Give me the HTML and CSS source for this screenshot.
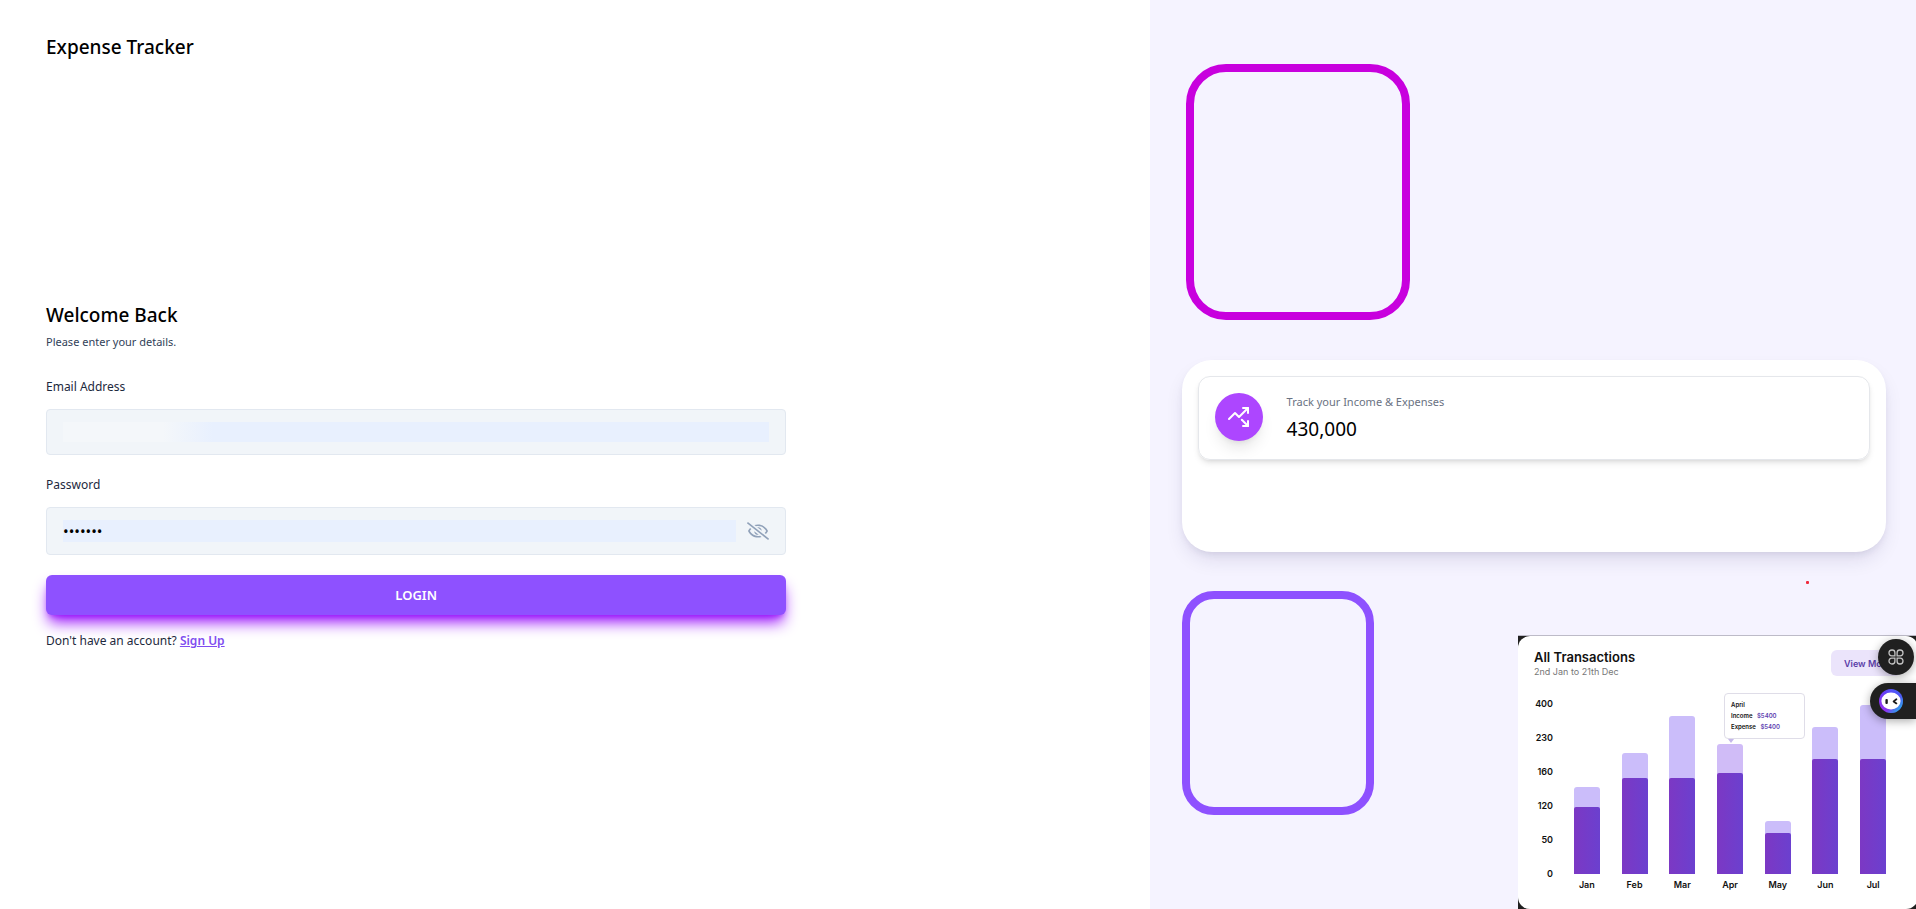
FILE: index.html
```
<!DOCTYPE html>
<html lang="en">
<head>
<meta charset="utf-8">
<meta name="viewport" content="width=device-width, initial-scale=1">
<title>Expense Tracker</title>
<link rel="stylesheet" href="styles.css">
</head>
<body>
<div class="page">
  <main class="auth">
    <h2 class="brand">Expense Tracker</h2>
    <div class="auth-body">
      <h3 class="title">Welcome Back</h3>
      <p class="subtitle">Please enter your details.</p>
      <form class="form">
        <label class="label" for="email">Email Address</label>
        <div class="field"><input class="input input-email" id="email" type="email"></div>
        <label class="label" for="password">Password</label>
        <div class="field">
          <input class="input input-password" id="password" type="password" value="1234567">
          <button class="toggle" type="button" aria-label="Show password">
            <svg width="22" height="18" viewBox="0 0 640 512" fill="currentColor"><path d="M634 471L36 3.51A16 16 0 0 0 13.51 6l-10 12.49A16 16 0 0 0 6 41l598 467.49a16 16 0 0 0 22.49-2.49l10-12.49A16 16 0 0 0 634 471zM296.79 146.47l134.79 105.38C429.36 191.91 380.48 144 320 144a112.26 112.26 0 0 0-23.21 2.47zm46.42 219.07L208.42 260.16C210.65 320.09 259.53 368 320 368a113 113 0 0 0 23.21-2.46zM320 112c98.65 0 189.09 55 237.93 144a285.53 285.53 0 0 1-44 60.2l37.74 29.5a333.7 333.7 0 0 0 52.9-75.11 32.35 32.35 0 0 0 0-29.19C550.29 135.59 442.93 64 320 64c-36.7 0-71.71 7-104.63 18.81l46.41 36.29c18.94-4.3 38.34-7.1 58.22-7.1zm0 288c-98.65 0-189.08-55-237.93-144a285.47 285.47 0 0 1 44.05-60.19l-37.74-29.5a333.6 333.6 0 0 0-52.89 75.1 32.35 32.35 0 0 0 0 29.19C89.72 376.41 197.08 448 320 448c36.7 0 71.71-7.05 104.63-18.81l-46.41-36.28C359.28 397.2 339.89 400 320 400z"/></svg>
          </button>
        </div>
        <button class="login" type="submit">LOGIN</button>
        <p class="signup">Don't have an account? <a class="signup-link" href="#">Sign Up</a></p>
      </form>
    </div>
  </main>

  <aside class="showcase">
    <div class="frame frame-top"></div>
    <div class="card">
      <div class="stat">
        <div class="stat-icon">
          <svg width="24" height="24" viewBox="0 0 24 24" fill="none" stroke="currentColor" stroke-width="2" stroke-linecap="round" stroke-linejoin="round"><path d="M14.828 14.828 21 21"/><path d="M21 16v5h-5"/><path d="m21 3-9 9-4-4-6 6"/><path d="M21 8V3h-5"/></svg>
        </div>
        <div>
          <h6 class="stat-label">Track your Income &amp; Expenses</h6>
          <p class="stat-value">430,000</p>
        </div>
      </div>
    </div>
    <span class="speck"></span>
    <div class="bottom">
      <div class="frame frame-bottom"></div>
      <div class="chart-back">
        <section class="chart">
          <header class="chart-head">
            <div>
              <h4 class="chart-title">All Transactions</h4>
              <p class="chart-range">2nd Jan to 21th Dec</p>
            </div>
            <button class="more" type="button">View More</button>
          </header>
          <div class="plot">
            <div class="axis"><span>400</span><span>230</span><span>160</span><span>120</span><span>50</span><span>0</span></div>
            <div class="bars">
              <div class="col"><div class="bar" style="height:87px"><div class="fill" style="height:67px"></div></div><span class="month">Jan</span></div>
              <div class="col"><div class="bar" style="height:121px"><div class="fill" style="height:96px"></div></div><span class="month">Feb</span></div>
              <div class="col"><div class="bar" style="height:158px"><div class="fill" style="height:96px"></div></div><span class="month">Mar</span></div>
              <div class="col"><div class="bar bar-active" style="height:130px"><div class="fill" style="height:101px"></div>
                <div class="tip"><p>April</p><p>Income <b>$5400</b></p><p>Expense <b>$5400</b></p></div></div><span class="month">Apr</span></div>
              <div class="col"><div class="bar" style="height:53px"><div class="fill" style="height:41px"></div></div><span class="month">May</span></div>
              <div class="col"><div class="bar" style="height:147px"><div class="fill" style="height:115px"></div></div><span class="month">Jun</span></div>
              <div class="col"><div class="bar" style="height:169px"><div class="fill" style="height:115px"></div></div><span class="month">Jul</span></div>
            </div>
          </div>
        </section>
      </div>
    </div>
  </aside>
</div>

<div class="widgets">
  <button class="widget-grid" type="button" aria-label="Apps">
    <svg width="16" height="16" viewBox="0 0 16 16" fill="none" stroke="#c4c4c4" stroke-width="1.3"><path d="M4 1h.2a2.7 2.7 0 0 1 2.7 2.7v3.2H3.7A2.8 2.8 0 0 1 1 4a3 3 0 0 1 3-3z"/><path d="M12 1a3 3 0 0 1 3 3 2.8 2.8 0 0 1-2.7 2.9H9.1V3.7A2.7 2.7 0 0 1 11.8 1z"/><path d="M4 15a3 3 0 0 1-3-3 2.8 2.8 0 0 1 2.7-2.9h3.2v3.2A2.7 2.7 0 0 1 4.2 15z"/><path d="M12 15a3 3 0 0 0 3-3 2.8 2.8 0 0 0-2.7-2.9H9.1v3.2a2.7 2.7 0 0 0 2.7 2.7z"/></svg>
  </button>
  <button class="widget-bot" type="button" aria-label="Assistant">
    <svg width="24" height="24" viewBox="0 0 24 24"><defs><linearGradient id="ring" x1="0" y1="1" x2="1" y2="0"><stop offset="0" stop-color="#a32cf0"/><stop offset=".5" stop-color="#6a3cf5"/><stop offset="1" stop-color="#3f6cf8"/></linearGradient><linearGradient id="glow" x1="0" y1="0" x2="1" y2="1"><stop offset=".6" stop-color="#20b8e8" stop-opacity="0"/><stop offset=".9" stop-color="#20b8e8"/></linearGradient></defs><circle cx="12" cy="12" r="12" fill="url(#ring)"/><circle cx="12" cy="12" r="12" fill="url(#glow)"/><ellipse cx="12" cy="12" rx="9.6" ry="8.4" fill="#fff"/><rect x="6.4" y="10" width="2.4" height="5" rx="1" fill="#1c1c1c"/><path d="M17.4 10.2 14.6 12.4l2.8 2" fill="none" stroke="#1c1c1c" stroke-width="1.8" stroke-linecap="round" stroke-linejoin="round"/></svg>
  </button>
</div>
</body>
</html>
```
FILE: styles.css
```
* { box-sizing: border-box; margin: 0; padding: 0; }

body {
  font-family: "Noto Sans", "Open Sans", sans-serif;
  background: #fff;
  color: #000;
}

button, input { font: inherit; border: 0; background: none; }
button { cursor: pointer; }

.page {
  display: grid;
  grid-template-columns: 3fr 2fr;
  min-height: 100vh;
  overflow: hidden;
}

/* Sign-in column */
.auth {
  display: flex;
  flex-direction: column;
  padding: 33px 46px 18px;
}

.brand, .title { font-size: 19px; font-weight: 500; line-height: 28px; }

.auth-body {
  flex: 1;
  display: flex;
  flex-direction: column;
  justify-content: center;
  width: 70%;
}

.subtitle { margin-top: 5px; font-size: 11px; line-height: 16px; color: #314158; }

.form { display: flex; flex-direction: column; margin-top: 27px; }

.label { font-size: 12px; line-height: 20px; color: #1d293d; }

.field {
  display: flex;
  align-items: center;
  gap: 11px;
  margin: 12px 0 20px;
  padding: 12px 16px;
  background: #f1f5f9;
  border: 1px solid #e2e8f0;
  border-radius: 4px;
}

.input { flex: 1; min-width: 0; outline: 0; font-size: 15px; }
.input-email { height: 20px; background: linear-gradient(90deg, #f4f7fa 100px, #e8f0fe 150px); }
.input-password { height: 22px; background: #e8f0fe; }

.toggle { display: flex; color: #90a1b9; }

.login {
  height: 40px;
  border-radius: 6px;
  background: #8e51ff;
  color: #fff;
  font-size: 13px;
  font-weight: 600;
  box-shadow: 0 10px 15px -3px #9810fa, 0 4px 6px -4px #9810fa;
}

.signup { margin-top: 16px; font-size: 12px; line-height: 20px; color: #1d293d; }
.signup-link { color: #7f4df0; font-weight: 600; }

/* Illustration column */
.showcase {
  position: relative;
  display: flex;
  flex-direction: column;
  padding: 64px 0 0 32px;
  background: #f5f3ff;
}

.frame-top {
  width: 224px;
  height: 256px;
  margin-left: 4px;
  border: 8px solid #c800de;
  border-radius: 40px;
}

.card {
  height: 192px;
  margin: 40px 30px 0 0;
  padding: 16px;
  background: #fff;
  border-radius: 30px;
  box-shadow: 0 10px 20px -3px #1d15501c, 0 4px 8px -3px #1d15501c;
}

.stat {
  display: flex;
  align-items: flex-start;
  gap: 24px;
  padding: 16px;
  border: 1px solid #e5e7eb;
  border-radius: 12px;
  box-shadow: 0 4px 6px -1px #0000001a, 0 2px 4px -2px #0000001a;
}

.stat-icon {
  display: grid;
  place-items: center;
  width: 48px;
  height: 48px;
  border-radius: 50%;
  background: #ad46ff;
  color: #fff;
  box-shadow: 0 10px 15px -3px #0000001a, 0 4px 6px -4px #0000001a;
}

.stat-label { font-size: 11px; font-weight: 400; line-height: 18px; color: #6a7282; }
.stat-value { margin-top: 4px; font-size: 19px; line-height: 28px; }

.speck {
  position: absolute;
  top: 581px;
  right: 107px;
  width: 3px;
  height: 3px;
  border-radius: 1px;
  background: #f02a3c;
}

.bottom {
  flex: 1;
  display: flex;
  justify-content: space-between;
  align-items: flex-start;
  margin-top: 39px;
}

.frame-bottom {
  width: 192px;
  height: 224px;
  border: 8px solid #8e51ff;
  border-radius: 32px;
}

/* Transactions chart */
.chart-back {
  align-self: flex-end;
  width: 400px;
  margin-right: -2px;
  background: #202020;
  border-top: 1px solid #bdbbc8;
}

.chart {
  height: 273px;
  padding: 13px 16px 0;
  background: #fff;
  border-radius: 12px;
  font-family: Inter, "Open Sans", sans-serif;
}

.chart-head { display: flex; justify-content: space-between; align-items: flex-start; padding-right: 1px; }
.chart-title { font-size: 13px; font-weight: 600; line-height: 17px; color: #111; }
.chart-range { font-size: 9px; line-height: 12px; color: #777; }

.more {
  width: 70px;
  height: 26px;
  margin-top: 1px;
  padding-left: 13px;
  border-radius: 6px;
  background: #ebe4fb;
  color: #5a3da8;
  font-size: 9px;
  font-weight: 600;
  text-align: left;
  white-space: nowrap;
}

.plot { display: flex; gap: 10px; margin-top: 8px; }

.axis, .bars { font-size: 9px; font-weight: 600; color: #111; }

.axis {
  display: grid;
  grid-template-rows: repeat(6, 34px);
  align-items: center;
  width: 19px;
  text-align: right;
}

.bars { flex: 1; display: flex; align-items: flex-end; margin: 0 5px -6px 0; }

.col { flex: 1; display: flex; flex-direction: column; align-items: center; }

.bar {
  position: relative;
  display: flex;
  align-items: flex-end;
  width: 26px;
  border-radius: 3px 3px 0 0;
  background: #cbbdfa;
}
.bar-active { background: #d0bcf7; }

.fill {
  width: 100%;
  border-radius: 2px 2px 0 0;
  background: linear-gradient(90deg, #7c38c4, #6b40cf);
}

.month { line-height: 22px; }

.tip {
  position: absolute;
  left: 7px;
  bottom: 135px;
  width: 81px;
  height: 46px;
  padding: 5px 6px;
  background: #fff;
  border: 1px solid #dfdde8;
  border-radius: 4px;
  font-size: 6px;
  line-height: 11px;
  white-space: nowrap;
}
.tip b { margin-left: 3px; font-weight: 600; color: #5d42b0; }
.tip::after {
  content: "";
  position: absolute;
  left: 3px;
  top: 45px;
  border: 3px solid transparent;
  border-top: 4px solid #c5b8ea;
}

/* Floating browser widgets */
.widgets {
  position: fixed;
  right: 0;
  top: 639px;
  display: flex;
  flex-direction: column;
  align-items: flex-end;
  gap: 8px;
}
.widget-grid, .widget-bot {
  display: flex;
  align-items: center;
  height: 36px;
  background: #202020;
  box-shadow: 0 2px 10px #00000055;
}
.widget-grid { justify-content: center; width: 36px; margin-right: 2px; border-radius: 50%; }
.widget-bot { width: 46px; padding-left: 9px; border-radius: 18px 0 0 18px; }
```
